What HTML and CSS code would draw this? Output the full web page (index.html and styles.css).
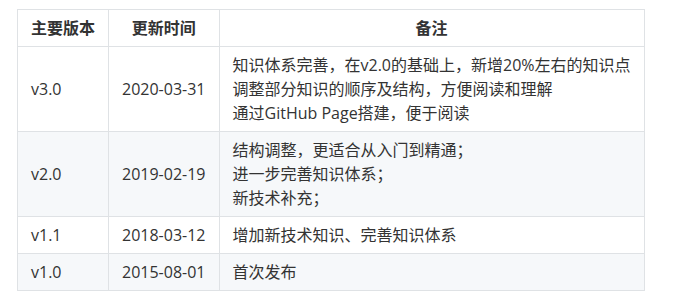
FILE: index.html
```html
<!DOCTYPE html>
<html lang="zh-CN">
<head>
<meta charset="utf-8">
<link rel="stylesheet" href="styles.css">
</head>
<body>
<div class="page">
<table class="versions">
  <thead>
    <tr><th>主要版本</th><th>更新时间</th><th>备注</th></tr>
  </thead>
  <tbody>
    <tr><td>v3.0</td><td>2020-03-31</td><td>知识体系完善，在v2.0的基础上，新增20%左右的知识点<br>调整部分知识的顺序及结构，方便阅读和理解<br>通过GitHub Page搭建，便于阅读</td></tr>
    <tr><td>v2.0</td><td>2019-02-19</td><td>结构调整，更适合从入门到精通；<br>进一步完善知识体系；<br>新技术补充；</td></tr>
    <tr><td>v1.1</td><td>2018-03-12</td><td>增加新技术知识、完善知识体系</td></tr>
    <tr><td>v1.0</td><td>2015-08-01</td><td>首次发布</td></tr>
  </tbody>
</table>
</div>
</body>
</html>
```
FILE: styles.css
```css
html, body {
  margin: 0;
  padding: 0;
  background: #ffffff;
}
.page {
  padding: 9px 17px;
  font-family: "Open Sans", "Noto Sans CJK SC", sans-serif;
  font-size: 16px;
  line-height: 24px;
  color: #333333;
}
.versions {
  border-collapse: collapse;
  border-spacing: 0;
}
.versions th,
.versions td {
  border: 1px solid #dfe2e5;
  padding: 6px 13px;
  text-align: left;
  white-space: nowrap;
}
.versions th {
  font-weight: 700;
  text-align: center;
}
.versions tbody tr:nth-child(2n+1) {
  background: #ffffff;
}
.versions tbody tr:nth-child(2n) {
  background: #f6f8fa;
}
```
